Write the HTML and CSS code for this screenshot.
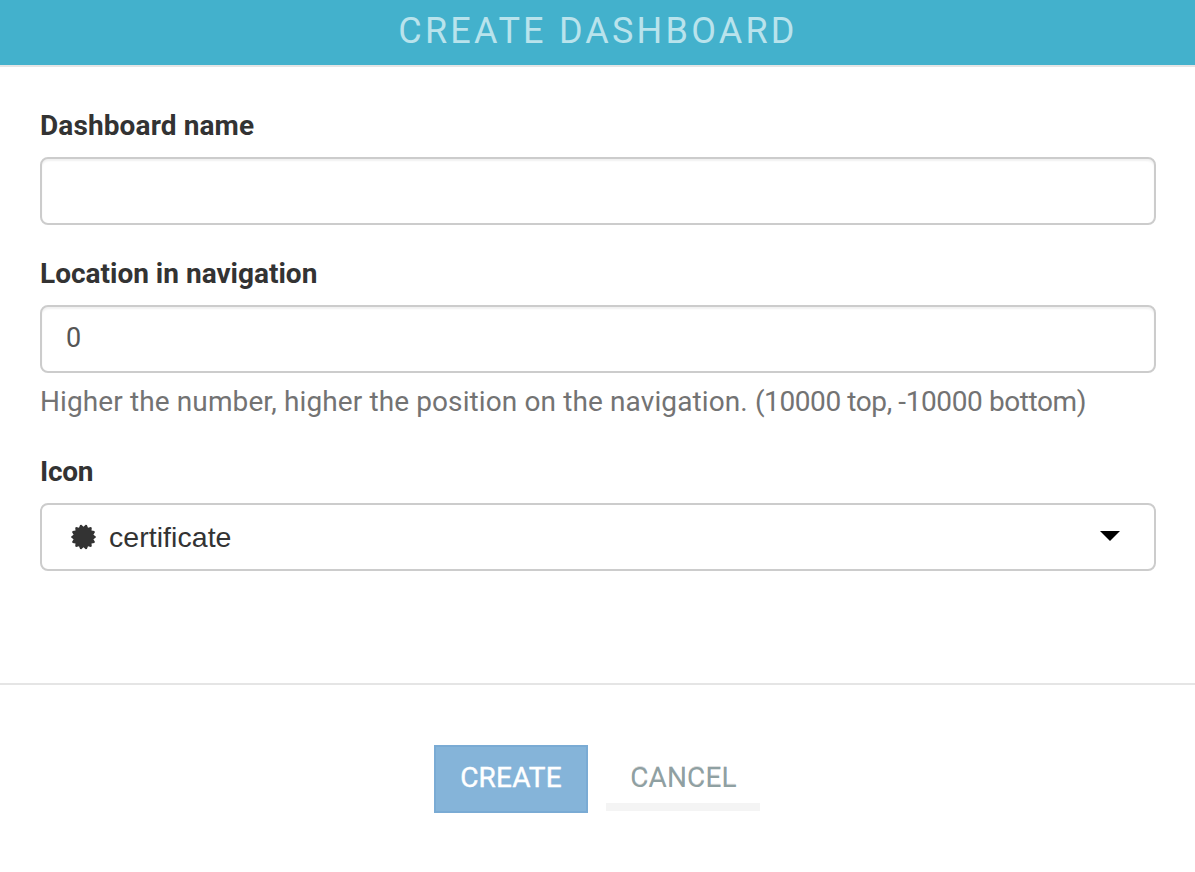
FILE: index.html
```html
<!DOCTYPE html>
<html lang="en">
<head>
<meta charset="utf-8">
<title>Create dashboard</title>
<link rel="stylesheet" href="styles.css">
</head>
<body>
<form class="modal">
  <header class="modal-header"><h1 class="title">CREATE DASHBOARD</h1></header>
  <main class="modal-body">
    <div class="field">
      <label class="label label-name" for="name">Dashboard name</label>
      <input class="control" id="name" type="text">
    </div>
    <div class="field">
      <label class="label label-location" for="location">Location in navigation</label>
      <input class="control" id="location" type="text" value="0">
      <p class="help">Higher the number, higher the position on the navigation. <span class="range">(10000 top, -10000 bottom)</span></p>
    </div>
    <div class="field">
      <span class="label label-icon">Icon</span>
      <div class="select">
        <svg class="certificate" viewBox="-13 -13 26 26" aria-hidden="true"><path d="M0-10.3 2.2-12.2 3.4-12 4.5-9.3 7.3-10 8.3-9.2 8-6.4 10.9-5.9 11.4-4.8 9.9-2.3 12.3-.6V.6L9.9 2.3 11.4 4.8 10.9 5.9 8 6.4 8.3 9.2 7.3 10 4.5 9.3 3.4 12 2.2 12.2 0 10.3-2.2 12.2-3.4 12-4.5 9.3-7.3 10-8.3 9.2-8 6.4-10.9 5.9-11.4 4.8-9.9 2.3-12.3.6V-.6L-9.9-2.3-11.4-4.8-10.9-5.9-8-6.4-8.3-9.2-7.3-10-4.5-9.3-3.4-12-2.2-12.2Z"/></svg>
        <span class="value">certificate</span>
        <svg class="caret" viewBox="0 0 20 10" aria-hidden="true"><path d="M0 0H20L10 10Z"/></svg>
      </div>
    </div>
  </main>
  <footer class="modal-footer">
    <button class="button create" type="button">CREATE</button>
    <button class="button cancel" type="button">CANCEL</button>
  </footer>
</form>
</body>
</html>
```
FILE: styles.css
```css
* { box-sizing: border-box; }
body { margin: 0; background: #fff; color: #333; font-family: Roboto, sans-serif; }
.modal { height: 872px; display: flex; flex-direction: column; }
.modal-header { height: 67px; background: #43b1cc; border-bottom: 2px solid #e5e5e5; text-align: center; }
.title { margin: 0; padding-left: 1px; font-size: 36px; line-height: 63px; font-weight: 400; letter-spacing: 3.2px; color: #b9e3ec; white-space: nowrap; }
.modal-body { height: 616px; padding: 38px 39px 0 40px; }
.field { display: flex; flex-direction: column; align-items: flex-start; margin-bottom: 28px; }
.label { height: 52px; line-height: 42px; font-size: 28px; font-weight: 700; white-space: nowrap; }
.label-name { letter-spacing: .12px; }
.label-icon { letter-spacing: -.3px; }
.control, .select { width: 100%; height: 68px; border: 2px solid #ccc; border-radius: 8px; background: #fff; }
.control { padding: 0 24px 2px; font: 400 27px Roboto, sans-serif; color: #555; box-shadow: inset 0 2px 2px rgba(0,0,0,.06); }
.help { margin: 9px 0 1px; height: 40px; line-height: 40px; font-size: 28px; letter-spacing: .11px; color: #737373; white-space: nowrap; }
.range { letter-spacing: -.4px; }
.select { display: flex; align-items: center; padding: 0 34px 0 28px; }
.certificate { width: 26px; height: 26px; margin-right: -1px; transform: translateX(.5px); fill: #333; }
.value { margin: 1px 0 0 14px; font: 28.5px "Liberation Sans", Arial, sans-serif; letter-spacing: .05px; }
.caret { width: 20px; height: 10px; margin-left: auto; margin-bottom: 3px; fill: #000; }
.modal-footer { flex: 1; display: flex; justify-content: center; align-items: flex-start; gap: 18px; padding: 60px 1px 0 0; border-top: 2px solid #e5e5e5; }
.button { width: 154px; height: 68px; padding: 0 0 3px; font: 400 28px Roboto, sans-serif; border: 0; }
.create { color: #fff; background: #85b4d9; border: 2px solid #7aabd4; letter-spacing: .2px; -webkit-text-stroke: .4px #fff; }
.cancel { height: 66px; padding: 6px 0 0 1px; letter-spacing: .15px; color: #8fa0a2; background: #fff; border-bottom: 8px solid #f4f4f4; text-shadow: 0 -1px 0 rgba(0,0,0,.15); }
```
